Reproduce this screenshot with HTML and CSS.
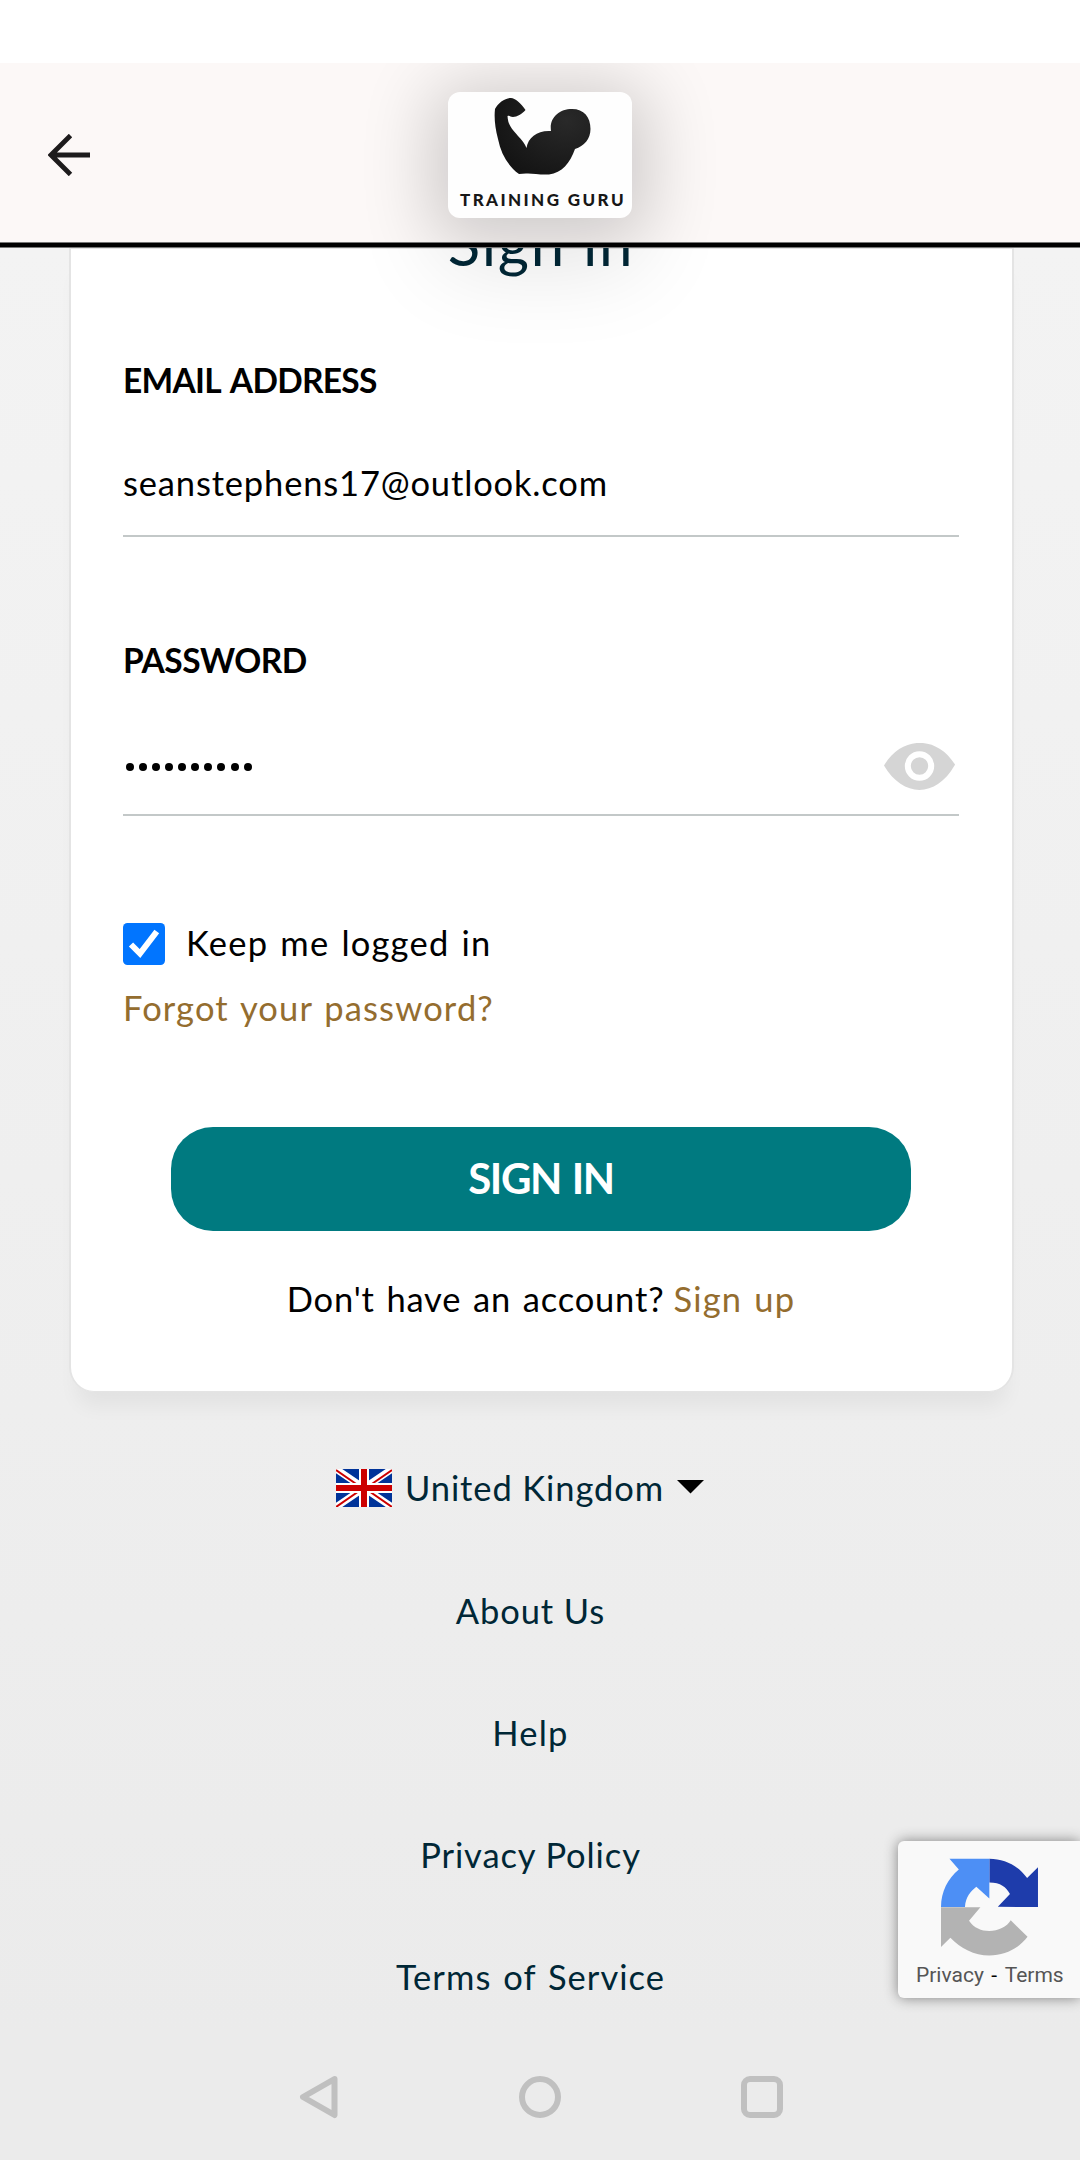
FILE: index.html
```html
<!DOCTYPE html>
<html lang="en">
<head>
<meta charset="utf-8">
<title>Sign in</title>
<link rel="stylesheet" href="styles.css">
</head>
<body>
<div class="status-bar"></div>
<header class="app-bar">
  <svg class="back" width="42" height="42" viewBox="0 0 42 42"><path d="M22.500 1.500L3 21L22.500 40.500M3 21H42" fill="none" stroke="#1d1b1c" stroke-width="4.800"/></svg>
  <div class="logo">
    <svg width="184" height="126" viewBox="0 0 184 126">
      <defs><radialGradient id="arm" cx=".75" cy=".3" r=".8"><stop offset="0" stop-color="#292929"/><stop offset="1" stop-color="#141414"/></radialGradient></defs>
      <path fill="url(#arm)" d="M71 82C60 74 53 62 50 47C47 36 46 25 47 17C50 11 57 6 63 6C67 6 73 11 77.500 18C74 22 69 25 65 25C62 25 62 23 59.500 24C60 34 65 38 70 44C74 48 77 52 78.500 56C80 45 90 38 103 39C101 26 111 17 124 17C136 17 142.500 25 142.500 37C142.500 47 136 54 127 57C122 71 114 81 101 82.500C91 83 84 81 78 81.500Z"/>
    </svg>
    <span class="logo-name">TRAINING GURU</span>
  </div>
</header>
<main class="page">
  <div class="logo-glow"><div class="logo-glow-box"></div></div>
  <form class="card">
    <h1 class="title">Sign in</h1>
    <label class="label">EMAIL ADDRESS</label>
    <div class="field email">seanstephens17@outlook.com</div>
    <label class="label second">PASSWORD</label>
    <div class="field password">
      <span class="dots"><i></i><i></i><i></i><i></i><i></i><i></i><i></i><i></i><i></i><i></i></span>
      <svg class="eye" width="71" height="47" viewBox="0 0 71 47"><path d="M0 22.500C17-6.500 52-8.500 71 21.500Q71 22 70.500 22.500C52 55 19 55 0 22.500Z" fill="#d5d5d5"/><circle cx="35.500" cy="23" r="11.700" fill="none" stroke="#fff" stroke-width="6"/></svg>
    </div>
    <div class="keep">
      <svg width="42" height="42" viewBox="0 0 42 42"><rect width="42" height="42" rx="4.500" fill="#0175ff"/><path d="M8 21.500L17 30.500L33.800 8.500" fill="none" stroke="#fff" stroke-width="6"/></svg>
      <span>Keep me logged in</span>
    </div>
    <a class="forgot">Forgot your password?</a>
    <div class="submit">SIGN IN</div>
    <p class="signup"><span>Don't have an account?</span><a>Sign up</a></p>
  </form>
  <nav class="links">
    <div class="country">
      <svg width="56" height="38" viewBox="0 0 56 38"><path fill="#039" d="M0 0h56v38H0z"/><path d="M0 0L56 38M56 0L0 38" stroke="#fff" stroke-width="7"/><path d="M0 1L26 19M56 1L30 19M0 38L26 20M56 38L30 20" stroke="#c00" stroke-width="2"/><path d="M28 0V38M0 19H56" stroke="#fff" stroke-width="10"/><path d="M28 0V38M0 19H56" stroke="#c00" stroke-width="6"/></svg>
      <span>United Kingdom</span>
      <svg class="caret" width="27" height="14" viewBox="0 0 27 14"><path d="M0 0H27L13.500 13.500Z"/></svg>
    </div>
    <a>About Us</a>
    <a class="help">Help</a>
    <a>Privacy Policy</a>
    <a class="terms">Terms of Service</a>
  </nav>
</main>
<div class="system-nav">
  <svg width="42" height="44" viewBox="0 0 42 44"><path d="M37.500 4L6 22L37.500 40Z"/></svg>
  <svg width="42" height="42" viewBox="0 0 42 42"><circle cx="21" cy="21" r="18"/></svg>
  <svg width="42" height="42" viewBox="0 0 42 42"><rect x="3" y="3" width="36" height="36" rx="6"/></svg>
</div>
<aside class="captcha">
  <svg width="97" height="98" viewBox="0 0 64 64"><path fill="#1e3cab" d="M64 31.955l-.016-1.370V5.700l-7.160 7.160C50.964 4.674 42.033.094 31.900.094v15.800c7.500 0 11 3 13.600 7.500l-8 8.500z"/><path fill="#4d8ff5" d="M31.900.094H5.600l6.160 7.160C4.584 13.116 0 21.963 0 31.963h15.800c.5-7 4-10.500 7.500-13.300l8.600 7.800z"/><path fill="#b3b3b3" d="M0 32.140V58.400l6.200-6.160C12.800 59.200 21.900 64 31.900 64c10.465 0 19.763-5 25.200-12.300L46 40.700C41.500 48.500 25.500 51.500 18.500 41L26 32.140z"/></svg>
  <div class="captcha-text"><span>Privacy</span><b>-</b><span>Terms</span></div>
</aside>
</body>
</html>
```
FILE: styles.css
```css
*, ::after { box-sizing: border-box; }
body {
  margin: 0;
  height: 2160px;
  overflow: hidden;
  display: flex;
  flex-direction: column;
  position: relative;
  background: #ebebeb;
  font: 34.5px/40px Lato, sans-serif;
  color: #000;
}
svg { display: block; flex: none; }
.status-bar { height: 63px; background: #fff; }
.app-bar {
  height: 185px;
  flex: none;
  position: relative;
  overflow: hidden;
  display: flex;
  justify-content: center;
  padding-top: 29px;
  background: #fcf8f7;
}
.app-bar::after {
  content: "";
  position: absolute;
  inset: auto 0 0;
  height: 6px;
  background: #000;
  border: solid #777;
  border-width: 1px 0;
}
.back { position: absolute; left: 48px; top: 71px; }
.logo {
  width: 184px;
  height: 126px;
  position: relative;
  border-radius: 12px;
  background: #fefefe;
  box-shadow: 0 10px 70px 16px rgba(0, 0, 0, .19);
}
.logo-name {
  position: absolute;
  left: 12px;
  top: 98px;
  font: 900 17px/20px Lato, sans-serif;
  letter-spacing: 2.4px;
  white-space: nowrap;
  color: #171717;
}
.page {
  height: 1786px;
  flex: none;
  overflow: hidden;
  position: relative;
  background: linear-gradient(#f3f3f3, #eee 65%, #ebebeb);
}
.logo-glow { position: absolute; inset: 0 0 auto; height: 150px; overflow: hidden; z-index: 1; }
.logo-glow-box {
  width: 184px;
  height: 126px;
  margin: -156px auto 0;
  border-radius: 12px;
  box-shadow: 0 40px 90px 8px rgba(0, 0, 0, .11);
}
.card {
  width: 945px;
  height: 1145px;
  margin: -1px 0 0 69px;
  padding: 0 53px 0 52px;
  display: flex;
  flex-direction: column;
  background: #fff;
  border: 2px solid #e4e4e4;
  border-bottom-width: 1px;
  border-radius: 0 0 25px 25px;
  box-shadow: 0 22px 20px -8px rgba(0, 0, 0, .05);
}
.title {
  margin: -40px 0 83px;
  font-size: 60px;
  line-height: 68px;
  font-weight: 400;
  letter-spacing: 1.7px;
  text-align: center;
  color: #002736;
}
.label { font-size: 33.5px; font-weight: 700; letter-spacing: -.7px; word-spacing: 3.5px; }
.label.second { margin-top: 103px; letter-spacing: -.5px; }
.field { border-bottom: 2px solid #c3c8c8; display: flex; justify-content: space-between; }
.email { margin-top: 63px; height: 74px; letter-spacing: .84px; }
.password { margin-top: 63px; height: 73px; padding-right: 4px; }
.dots { display: flex; gap: 5.15px; padding: 20px 0 0 2.5px; }
.dots i { width: 8px; height: 8px; border-radius: 50%; background: #000; }
.keep { margin-top: 107px; height: 42px; display: flex; gap: 21px; letter-spacing: 1.23px; word-spacing: 2px; }
.forgot { margin-top: 23px; color: #946d2f; letter-spacing: 1.13px; word-spacing: 2px; }
.submit {
  width: 740px;
  height: 104px;
  margin: 99px 0 0 48px;
  border-radius: 42px;
  background: #007a80;
  color: #fff;
  font-size: 42px;
  font-weight: 700;
  line-height: 102px;
  letter-spacing: -1.4px;
  word-spacing: 2px;
  text-align: center;
}
.signup {
  margin: 48px 0 0;
  display: flex;
  justify-content: center;
  gap: 9px;
  letter-spacing: .83px;
  word-spacing: 2px;
}
.signup a { color: #946d2f; letter-spacing: 1.2px; }
.links {
  margin: 75px 19px 0 0;
  display: flex;
  flex-direction: column;
  align-items: center;
  gap: 82px;
  letter-spacing: .9px;
  color: #002736;
}
.help { letter-spacing: 1.2px; }
.terms { letter-spacing: 1.05px; word-spacing: 2px; }
.country { display: flex; gap: 13px; align-items: center; height: 42px; margin-right: 21px; }
.country .caret { margin-bottom: 2px; }
.system-nav {
  height: 126px;
  display: flex;
  justify-content: center;
  align-items: center;
  gap: 180px;
  background: #ebebeb;
}
.system-nav svg { fill: none; stroke: #c0c0c0; stroke-width: 6; stroke-linejoin: round; }
.captcha {
  position: absolute;
  right: 0;
  top: 1841px;
  width: 182px;
  height: 157px;
  padding: 17px 0 0 18px;
  background: #f9f9f9;
  border-radius: 6px 0 0 6px;
  box-shadow: 0 0 14px #808080;
  font: 21px/28px Roboto, sans-serif;
  color: #555;
}
.captcha svg { margin-left: 25px; }
.captcha-text { display: flex; gap: 7.5px; padding-top: 5px; }
.captcha-text b { color: #000; font-weight: 400; }
```
